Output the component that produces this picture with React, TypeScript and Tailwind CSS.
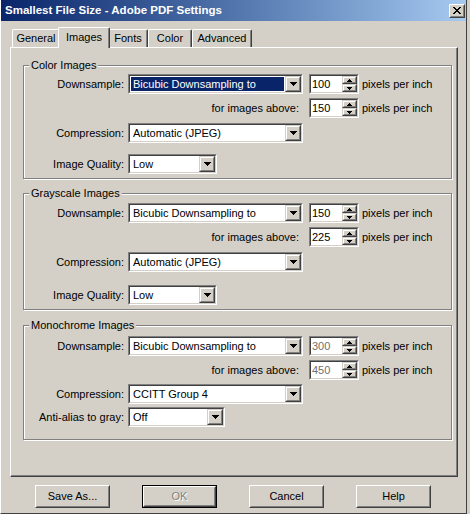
import React from 'react';

const sunkenOuter = 'border border-t-[#808080] border-l-[#808080] border-r-white border-b-white';
const sunkenInner = 'border border-t-[#404040] border-l-[#404040] border-r-[#d4d0c8] border-b-[#d4d0c8]';
const raisedOuter = 'border border-t-[#d4d0c8] border-l-[#d4d0c8] border-r-[#404040] border-b-[#404040]';
const raisedInner = 'border border-t-white border-l-white border-r-[#808080] border-b-[#808080]';

const DownArrow = () => (
    <svg width="7" height="4" viewBox="0 0 7 4" shapeRendering="crispEdges">
        <path d="M0 0h7v1h-1v1h-1v1h-1v1h-1v-1h-1v-1h-1v-1h-1z" fill="#000" />
    </svg>
);

const SmallArrow = ({ up }: { up?: boolean }) => (
    <svg width="5" height="3" viewBox="0 0 5 3" shapeRendering="crispEdges">
        {up ? (
            <path d="M2 0h1v1h1v1h1v1h-5v-1h1v-1h1z" fill="#000" />
        ) : (
            <path d="M0 0h5v1h-1v1h-1v1h-1v-1h-1v-1h-1z" fill="#000" />
        )}
    </svg>
);

const DropButton = () => (
    <div className={`flex h-full w-[16px] bg-[#d4d0c8] ${raisedOuter}`}>
        <div className={`flex flex-1 items-center justify-center ${raisedInner}`}>
            <DownArrow />
        </div>
    </div>
);

interface SelectProps {
    value: string;
    width: string;
    selected?: boolean;
}

const Select: React.FC<SelectProps> = ({ value, width, selected }) => (
    <div className={`flex h-[20px] ${width} ${sunkenOuter}`}>
        <div className={`flex flex-1 bg-white ${sunkenInner}`}>
            <div className="flex min-w-0 flex-1 p-px">
                <div className={`flex flex-1 items-center whitespace-nowrap pl-[2px] ${selected ? 'bg-[#0a246a] text-white' : ''}`}>
                    {value}
                </div>
            </div>
            <DropButton />
        </div>
    </div>
);

const SpinButton = ({ up }: { up?: boolean }) => (
    <div className={`flex flex-1 bg-[#d4d0c8] ${raisedOuter}`}>
        <div className={`flex flex-1 items-center justify-center ${raisedInner}`}>
            <SmallArrow up={up} />
        </div>
    </div>
);

const Spinner = ({ value, dim }: { value: string; dim?: boolean }) => (
    <div className={`ml-[6px] flex h-[20px] w-[50px] ${sunkenOuter}`}>
        <div className={`flex flex-1 bg-white ${sunkenInner}`}>
            <div className={`flex flex-1 items-center pl-[1px] ${dim ? 'text-[#707070]' : ''}`}>{value}</div>
            <div className="flex w-[15px] flex-col">
                <SpinButton up />
                <SpinButton />
            </div>
        </div>
    </div>
);

interface GroupProps {
    title: string;
    height: string;
    top: string;
    children: React.ReactNode;
}

const Group: React.FC<GroupProps> = ({ title, height, top, children }) => (
    <div className={`relative flex flex-col border border-[#808080] shadow-[inset_1px_1px_0_#fff,1px_1px_0_#fff] ${height} ${top}`}>
        <div className="absolute -top-[7px] left-[5px] bg-[#d4d0c8] px-[2px] leading-[13px]">{title}</div>
        {children}
    </div>
);

const Label = ({ children }: { children: React.ReactNode }) => (
    <div className="w-[100px] whitespace-nowrap text-right">{children}</div>
);

interface GroupData {
    title: string;
    height: string;
    top: string;
    gaps: [string, string, string, string];
    downsample: string;
    res: string;
    above: string;
    selected?: boolean;
    compression: string;
    lastLabel: string;
    lastValue: string;
    lastWidth: string;
    dim?: boolean;
}

const groups: GroupData[] = [
    {
        title: 'Color Images',
        height: 'h-[114px]',
        top: 'mt-[17px]',
        gaps: ['mt-[8px]', 'mt-[4px]', 'mt-[5px]', 'mt-[11px]'],
        downsample: 'Bicubic Downsampling to',
        res: '100',
        above: '150',
        selected: true,
        compression: 'Automatic (JPEG)',
        lastLabel: 'Image Quality:',
        lastValue: 'Low',
        lastWidth: 'w-[89px]',
    },
    {
        title: 'Grayscale Images',
        height: 'h-[117px]',
        top: 'mt-[14px]',
        gaps: ['mt-[9px]', 'mt-[4px]', 'mt-[5px]', 'mt-[13px]'],
        downsample: 'Bicubic Downsampling to',
        res: '150',
        above: '225',
        compression: 'Automatic (JPEG)',
        lastLabel: 'Image Quality:',
        lastValue: 'Low',
        lastWidth: 'w-[89px]',
    },
    {
        title: 'Monochrome Images',
        height: 'h-[115px]',
        top: 'mt-[15px]',
        gaps: ['mt-[10px]', 'mt-[4px]', 'mt-[4px]', 'mt-[3px]'],
        downsample: 'Bicubic Downsampling to',
        res: '300',
        above: '450',
        dim: true,
        compression: 'CCITT Group 4',
        lastLabel: 'Anti-alias to gray:',
        lastValue: 'Off',
        lastWidth: 'w-[97px]',
    },
];

const tabs = [
    { name: 'General', width: 'w-[48px]' },
    { name: 'Images', width: 'w-[52px]', active: true },
    { name: 'Fonts', width: 'w-[40px]' },
    { name: 'Color', width: 'w-[44px]' },
    { name: 'Advanced', width: 'w-[60px]' },
];

const buttons = [
    { label: 'Save As...' },
    { label: 'OK', isDefault: true, disabled: true },
    { label: 'Cancel' },
    { label: 'Help' },
];

const PushButton = ({ label, isDefault, disabled }: { label: string; isDefault?: boolean; disabled?: boolean }) => {
    const face = (
        <div className="flex flex-1 border border-t-white border-l-white border-r-[#404040] border-b-[#404040]">
            <div className="flex flex-1 items-center justify-center border border-t-[#d4d0c8] border-l-[#d4d0c8] border-r-[#808080] border-b-[#808080]">
                <span className={disabled ? 'text-[#808080] [text-shadow:1px_1px_0_#fff]' : ''}>{label}</span>
            </div>
        </div>
    );
    return (
        <div className={`flex h-[23px] w-[75px] bg-[#d4d0c8] ${isDefault ? 'border border-black' : ''}`}>
            {face}
        </div>
    );
};

export default function App() {
    return (
        <div className="h-[514px] w-[470px] overflow-hidden bg-[#d4d0c8] font-['Liberation_Sans',Arial,sans-serif] text-[11px] leading-[13px] text-black">
            <div className="flex h-full w-[467px] flex-col border-b border-l border-r border-b-[#404040] border-l-white border-r-[#404040]">
                {/* Title bar */}
                <div className="flex h-[21px] items-center justify-between bg-linear-to-r from-[#0a246a] to-[#a6caf0] pl-[4px] pr-[1px]">
                    <span className="whitespace-nowrap text-[11.5px] font-bold text-white">Smallest File Size - Adobe PDF Settings</span>
                    <div className={`flex h-[14px] w-[16px] bg-[#d4d0c8] border border-t-white border-l-white border-r-[#404040] border-b-[#404040]`}>
                        <div className="flex flex-1 items-center justify-center border border-t-[#d4d0c8] border-l-[#d4d0c8] border-r-[#808080] border-b-[#808080]">
                            <svg width="8" height="7" viewBox="0 0 8 7" shapeRendering="crispEdges">
                                <path d="M0 0h2v1h1v1h2v-1h1v-1h2v1h-1v1h-1v1h-1v1h1v1h1v1h1v1h-2v-1h-1v-1h-2v1h-1v1h-2v-1h1v-1h1v-1h1v-1h-1v-1h-1v-1h-1z" fill="#000" />
                            </svg>
                        </div>
                    </div>
                </div>

                {/* Body */}
                <div className="flex flex-1 flex-col pl-[9px] pr-[8px]">
                    {/* Tabs */}
                    <div className="mt-[6px] flex h-[20px] items-end pl-[2px]">
                        {tabs.map((t) => (
                            <div
                                key={t.name}
                                className={`flex items-center justify-center rounded-t-[2px] border-l border-r border-t border-l-white border-r-[#404040] border-t-white bg-[#d4d0c8] shadow-[inset_-1px_0_0_#808080] ${t.width} ${
                                    t.active ? 'relative z-10 -mx-[2px] -mb-px h-[21px] pb-[2px]' : 'h-[18px]'
                                }`}
                            >
                                {t.name}
                            </div>
                        ))}
                    </div>

                    {/* Panel */}
                    <div className="flex h-[430px] flex-col border-b border-l border-r border-t border-b-[#404040] border-l-white border-r-[#404040] border-t-white pl-[12px] pr-[5px] shadow-[inset_-1px_-1px_0_#808080]">
                        {groups.map((g) => (
                            <Group key={g.title} title={g.title} height={g.height} top={g.top}>
                                <div className={`flex h-[20px] items-center ${g.gaps[0]}`}>
                                    <Label>Downsample:</Label>
                                    <div className="ml-[4px]">
                                        <Select value={g.downsample} width="w-[175px]" selected={g.selected} />
                                    </div>
                                    <Spinner value={g.res} dim={g.dim} />
                                    <span className="ml-[3px] whitespace-nowrap">pixels per inch</span>
                                </div>
                                <div className={`flex h-[20px] items-center ${g.gaps[1]}`}>
                                    <div className="w-[279px] whitespace-nowrap pr-[4px] text-right">for images above:</div>
                                    <Spinner value={g.above} dim={g.dim} />
                                    <span className="ml-[3px] whitespace-nowrap">pixels per inch</span>
                                </div>
                                <div className={`flex h-[20px] items-center ${g.gaps[2]}`}>
                                    <Label>Compression:</Label>
                                    <div className="ml-[4px]">
                                        <Select value={g.compression} width="w-[175px]" />
                                    </div>
                                </div>
                                <div className={`flex h-[20px] items-center ${g.gaps[3]}`}>
                                    <Label>{g.lastLabel}</Label>
                                    <div className="ml-[4px]">
                                        <Select value={g.lastValue} width={g.lastWidth} />
                                    </div>
                                </div>
                            </Group>
                        ))}
                    </div>

                    {/* Buttons */}
                    <div className="ml-[25px] mt-[8px] flex gap-[32px]">
                        {buttons.map((b) => (
                            <PushButton key={b.label} label={b.label} isDefault={b.isDefault} disabled={b.disabled} />
                        ))}
                    </div>
                </div>
            </div>
        </div>
    );
}
